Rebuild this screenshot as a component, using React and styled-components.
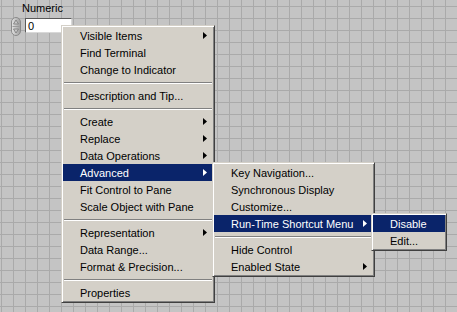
import React from 'react';
import styled, { createGlobalStyle } from 'styled-components';

const GlobalStyle = createGlobalStyle`
    html, body {
        margin: 0;
        padding: 0;
    }
    body {
        font-family: "Liberation Sans", Arial, sans-serif;
        font-size: 11px;
    }
`;

const mainItems = [
    { label: 'Visible Items', sub: true },
    { label: 'Find Terminal' },
    { label: 'Change to Indicator' },
    'sep',
    { label: 'Description and Tip...' },
    'sep',
    { label: 'Create', sub: true },
    { label: 'Replace', sub: true },
    { label: 'Data Operations', sub: true },
    { label: 'Advanced', sub: true, active: true },
    { label: 'Fit Control to Pane' },
    { label: 'Scale Object with Pane' },
    'sep',
    { label: 'Representation', sub: true },
    { label: 'Data Range...' },
    { label: 'Format & Precision...' },
    'sep',
    { label: 'Properties' },
];

const advancedItems = [
    { label: 'Key Navigation...' },
    { label: 'Synchronous Display' },
    { label: 'Customize...' },
    { label: 'Run-Time Shortcut Menu', sub: true, active: true },
    'sep',
    { label: 'Hide Control' },
    { label: 'Enabled State', sub: true },
];

const shortcutItems = [
    { label: 'Disable', active: true },
    { label: 'Edit...' },
];

const Arrow = ({ color }) => (
    <svg width="4" height="7" viewBox="0 0 4 7">
        <path d="M0 0 L4 3.5 L0 7 Z" fill={color} />
    </svg>
);

const Spinner = () => (
    <svg width="10" height="19" viewBox="0 0 10 19">
        <defs>
            <linearGradient id="spin" x1="0" y1="0" x2="1" y2="0">
                <stop offset="0" stopColor="#e4e4e4" />
                <stop offset="1" stopColor="#9c9c9c" />
            </linearGradient>
        </defs>
        <rect x="0.5" y="0.5" width="9" height="18" rx="4.5" fill="url(#spin)" stroke="#8a8a8a" />
        <path d="M5 3 L7.5 7 L2.5 7 Z" fill="#c8c8c8" stroke="#7a7a7a" strokeWidth="0.8" />
        <line x1="1.5" y1="9.5" x2="8.5" y2="9.5" stroke="#9a9a9a" />
        <path d="M5 16 L7.5 12 L2.5 12 Z" fill="#c8c8c8" stroke="#7a7a7a" strokeWidth="0.8" />
    </svg>
);

function Menu({ items, top, left, width }) {
    return (
        <MenuBox style={{ top, left, width }}>
            {items.map((item, i) =>
                item === 'sep' ? (
                    <Separator key={i} />
                ) : (
                    <Item key={i} $active={item.active}>
                        <span>{item.label}</span>
                        {item.sub && <Arrow color={item.active ? '#ffffff' : '#000000'} />}
                    </Item>
                )
            )}
        </MenuBox>
    );
}

export default function App() {
    return (
        <>
            <GlobalStyle />
            <Panel>
                <Control>
                    <Label>Numeric</Label>
                    <ControlRow>
                        <Spinner />
                        <NumBox>0</NumBox>
                    </ControlRow>
                </Control>
                <Menu items={mainItems} top={25} left={61} width={154} />
                <Menu items={advancedItems} top={162} left={212} width={163} />
                <Menu items={shortcutItems} top={213} left={371} width={76} />
            </Panel>
        </>
    );
}

const Panel = styled.div`
    position: relative;
    width: 457px;
    height: 312px;
    overflow: hidden;
    background-color: #c4c4c4;
    background-image:
        linear-gradient(to right, #aaaaaa 1px, transparent 1px),
        linear-gradient(to bottom, #aaaaaa 1px, transparent 1px);
    background-size: 12px 12px;
    background-position: 1px 6px;
`;

const Control = styled.div`
    display: flex;
    flex-direction: column;
    align-items: flex-start;
    padding: 2px 0 0 11px;
`;

const Label = styled.div`
    margin-left: 11px;
    font-size: 11px;
    line-height: 13px;
    color: #000;
`;

const ControlRow = styled.div`
    display: flex;
    align-items: flex-start;
    margin-top: 2px;
    svg {
        display: block;
    }
`;

const NumBox = styled.div`
    box-sizing: border-box;
    margin: 1px 0 0 4px;
    width: 47px;
    height: 15px;
    padding-left: 2px;
    background: #ffffff;
    border: 1px solid;
    border-color: #5a5a5a #d8d8d8 #d8d8d8 #5a5a5a;
    font-size: 11px;
    line-height: 14px;
    color: #000;
`;

const MenuBox = styled.div`
    position: absolute;
    box-sizing: border-box;
    display: flex;
    flex-direction: column;
    padding: 1px;
    background: #d4d0c8;
    border: 1px solid;
    border-color: #d4d0c8 #404040 #404040 #d4d0c8;
    box-shadow: inset 1px 1px 0 #ffffff, inset -1px -1px 0 #808080;
`;

const Item = styled.div`
    box-sizing: border-box;
    display: flex;
    align-items: center;
    justify-content: space-between;
    height: 17px;
    padding: 1px 6px 0 17px;
    line-height: 16px;
    white-space: nowrap;
    color: ${p => (p.$active ? '#ffffff' : '#000000')};
    background: ${p => (p.$active ? '#0a246a' : 'transparent')};
    svg {
        display: block;
        flex-shrink: 0;
        margin-top: -1px;
    }
`;

const Separator = styled.div`
    height: 9px;
    display: flex;
    align-items: center;
    &::before {
        content: '';
        flex: 1;
        margin: 0 1px;
        height: 0;
        border-top: 1px solid #808080;
        border-bottom: 1px solid #ffffff;
    }
`;
